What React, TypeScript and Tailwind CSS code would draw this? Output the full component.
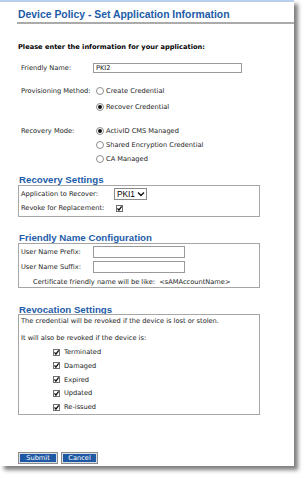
import React from 'react'

const body = "font-['DejaVu_Sans',Verdana,sans-serif] text-[6.65px] leading-[10px] text-[#1a1a1a]"
const heading = "font-['Liberation_Sans',Arial,sans-serif] font-bold text-[9.7px] text-[#1d5ca9]"

function Radio({ checked }: { checked?: boolean }) {
  return (
    <span className="w-[8px] h-[8px] rounded-full border border-[#8e8e8e] bg-white flex items-center justify-center shrink-0">
      {checked && <span className="w-[4px] h-[4px] rounded-full bg-[#111]" />}
    </span>
  )
}

function Check() {
  return (
    <svg width="7" height="7" viewBox="0 0 7 7" className="shrink-0">
      <rect x="0.5" y="0.5" width="6" height="6" fill="#fff" stroke="#6f6f6f" />
      <path d="M1.5 3.4 L2.9 5.2 L5.7 1.3" fill="none" stroke="#111" strokeWidth="1.3" />
    </svg>
  )
}

function RadioRow({ label, checked }: { label: string; checked?: boolean }) {
  return (
    <div className="h-[10px] flex items-center gap-[2px]">
      <Radio checked={checked} />
      <span>{label}</span>
    </div>
  )
}

export default function App() {
  const reasons = ['Terminated', 'Damaged', 'Expired', 'Updated', 'Re-issued']

  return (
    <div className="min-h-screen bg-white">
      <div className="w-[294px] h-[466px] bg-white border-t-2 border-[#b9cfee] shadow-[4px_4px_4px_rgba(0,0,0,0.5)] flex flex-col">
        <div className="ml-[17px] pt-[6px] pb-[1px] pl-px border-b-2 border-[#ababab]">
          <h1 className="font-['Liberation_Sans',Arial,sans-serif] font-bold text-[10.4px] leading-[13px] text-[#1c5ba8]">
            Device Policy - Set Application Information
          </h1>
        </div>

        <div className={`pl-[18px] flex flex-col ${body}`}>
          <p className="mt-[18px] h-[10px] font-bold text-black">
            Please enter the information for your application:
          </p>

          <div className="mt-[11px] pl-[3px] h-[10px] flex items-center">
            <span className="w-[72px]">Friendly Name:</span>
            <div className="w-[149px] h-[10px] border border-[#9a9a9a] bg-white pl-[2px] flex items-center">PKI2</div>
          </div>

          <div className="mt-[13px] pl-[3px] flex">
            <span className="w-[75px] h-[10px] flex items-center">Provisioning Method:</span>
            <div className="flex flex-col gap-[6px]">
              <RadioRow label="Create Credential" />
              <RadioRow label="Recover Credential" checked />
            </div>
          </div>

          <div className="mt-[14px] pl-[3px] flex">
            <span className="w-[75px] h-[10px] flex items-center">Recovery Mode:</span>
            <div className="flex flex-col gap-[4px]">
              <RadioRow label="ActivID CMS Managed" checked />
              <RadioRow label="Shared Encryption Credential" />
              <RadioRow label="CA Managed" />
            </div>
          </div>

          <h2 className={`mt-[10px] pl-px h-[11px] leading-[11px] ${heading}`}>Recovery Settings</h2>
          <div className="w-[242px] border border-[#a6a6a6] pt-[2px] pb-[3px] pl-[2px]">
            <div className="h-[12px] flex items-center">
              <span className="w-[93px]">Application to Recover:</span>
              <div className="w-[33px] h-[12px] border border-[#8a8a8a] bg-white pl-[2px] flex items-center gap-[2px] font-['Liberation_Sans',Arial,sans-serif] text-[8.3px] text-black">
                <span>PKI1</span>
                <svg width="8" height="6" viewBox="0 0 8 6">
                  <path d="M1 1.5 L4 4.5 L7 1.5" fill="none" stroke="#111" strokeWidth="1.4" />
                </svg>
              </div>
            </div>
            <div className="mt-[3px] h-[10px] flex items-center">
              <span className="w-[95px]">Revoke for Replacement:</span>
              <Check />
            </div>
          </div>

          <h2 className={`mt-[15px] pl-px h-[11px] leading-[11px] ${heading}`}>Friendly Name Configuration</h2>
          <div className="w-[242px] border border-[#a6a6a6] pt-[2px] pl-[2px]">
            <div className="h-[12px] flex items-center">
              <span className="w-[72px]">User Name Prefix:</span>
              <div className="w-[92px] h-[12px] border border-[#9a9a9a] bg-white" />
            </div>
            <div className="mt-[3px] h-[12px] flex items-center">
              <span className="w-[72px]">User Name Suffix:</span>
              <div className="w-[92px] h-[12px] border border-[#9a9a9a] bg-white" />
            </div>
            <p className="mt-[4px] ml-[12px] h-[10px] flex items-center whitespace-pre">
              {'Certificate friendly name will be like:  <sAMAccountName>'}
            </p>
          </div>

          <h2 className={`mt-[16px] pl-px h-[10px] leading-[12px] ${heading}`}>Revocation Settings</h2>
          <div className="w-[242px] border border-[#a6a6a6] pt-px pb-[2px] pl-[2px]">
            <p className="h-[10px] flex items-center">The credential will be revoked if the device is lost or stolen.</p>
            <p className="mt-[7px] h-[10px] flex items-center">It will also be revoked if the device is:</p>
            <div className="mt-[4px] ml-[32px] flex flex-col gap-[3.75px]">
              {reasons.map((r) => (
                <div key={r} className="h-[10px] flex items-center gap-[4px]">
                  <Check />
                  <span>{r}</span>
                </div>
              ))}
            </div>
          </div>

          <div className="mt-[37px] flex gap-[3px]">
            <button className="w-[40px] h-[12px] bg-[#1f58a3] border border-[#8d8d8d] shadow-[inset_0_0_0_1px_#d6deea] text-white flex items-center justify-center">
              Submit
            </button>
            <button className="w-[37px] h-[12px] bg-[#1f58a3] border border-[#8d8d8d] shadow-[inset_0_0_0_1px_#d6deea] text-white flex items-center justify-center">
              Cancel
            </button>
          </div>
        </div>
      </div>
    </div>
  )
}
